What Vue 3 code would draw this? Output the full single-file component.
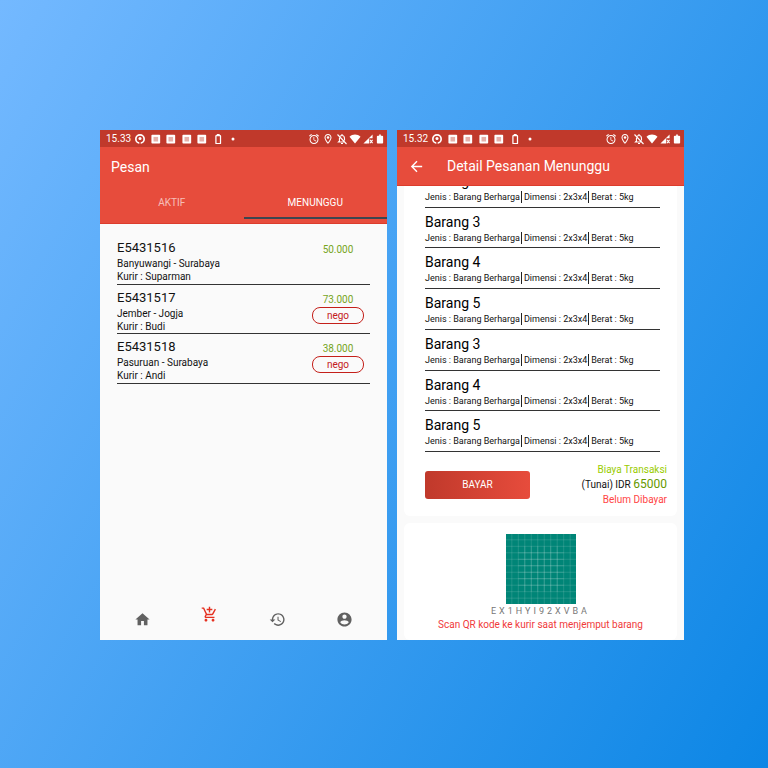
<script setup>
import { h, ref } from 'vue'

const activeTab = ref('MENUNGGU')
const tabs = ['AKTIF', 'MENUNGGU']

const orders = [
  { code: 'E5431516', route: 'Banyuwangi - Surabaya', courier: 'Suparman', price: '50.000', nego: false },
  { code: 'E5431517', route: 'Jember - Jogja', courier: 'Budi', price: '73.000', nego: true },
  { code: 'E5431518', route: 'Pasuruan - Surabaya', courier: 'Andi', price: '38.000', nego: true },
]

const items = ['Barang 5', 'Barang 3', 'Barang 4', 'Barang 5', 'Barang 3', 'Barang 4', 'Barang 5']

const nav = [
  { label: 'Beranda', path: 'M10 20v-6h4v6h5v-8h3L12 3 2 12h3v8z' },
  {
    label: 'Pesan',
    active: true,
    path: 'M11 9h2V6h3V4h-3V1h-2v3H8v2h3v3zm-4 9c-1.1 0-1.99.9-1.99 2S5.9 22 7 22s2-.9 2-2-.9-2-2-2zm10 0c-1.1 0-1.99.9-1.99 2s.89 2 1.99 2 2-.9 2-2-.9-2-2-2zm-9.83-3.25l.03-.12.9-1.63h7.45c.75 0 1.41-.41 1.75-1.03l3.86-7.01L19.42 4h-.01l-1.1 2-2.76 5H8.53l-.13-.27L6.16 6l-.95-2-.94-2H1v2h2l3.6 7.59-1.35 2.45c-.16.28-.25.61-.25.96 0 1.1.9 2 2 2h12v-2H7.42c-.13 0-.25-.11-.25-.25z',
  },
  {
    label: 'Riwayat',
    path: 'M13 3c-4.97 0-9 4.03-9 9H1l3.89 3.89.07.14L9 12H6c0-3.87 3.13-7 7-7s7 3.13 7 7-3.13 7-7 7c-1.93 0-3.68-.79-4.94-2.06l-1.42 1.42C8.27 19.99 10.51 21 13 21c4.97 0 9-4.03 9-9s-4.03-9-9-9zm-1 5v5l4.28 2.54.72-1.21-3.5-2.08V8H12z',
  },
  {
    label: 'Akun',
    path: 'M12 2C6.48 2 2 6.48 2 12s4.48 10 10 10 10-4.48 10-10S17.52 2 12 2zm0 3c1.66 0 3 1.34 3 3s-1.34 3-3 3-3-1.34-3-3 1.34-3 3-3zm0 14.2c-2.5 0-4.71-1.28-6-3.22.03-1.99 4-3.08 6-3.08 1.99 0 5.97 1.09 6 3.08-1.29 1.94-3.5 3.22-6 3.22z',
  },
]

const outer = [9, 19, 29, 39, 49, 59, 69, 79, 89, 99]
const inner = [29, 39, 49, 59, 69, 79]
const gridPath = outer.map((n) => `M${n} 0V108M0 ${n}H108`).join('')
const innerPath = inner.map((n) => `M${n} 19V89M19 ${n}H89`).join('')

const svg = (cls, children) => h('svg', { class: cls, viewBox: '0 0 24 24', 'aria-hidden': 'true' }, children)
const solid = (d) => h('path', { d, fill: 'currentColor' })

const StatusBar = (props) =>
  h('div', { class: 'status' }, [
    h('span', { class: 'clock' }, props.time),
    h('div', { class: 'notices' }, [
      svg('s-icon', [
        h('circle', { cx: 12, cy: 12, r: 10, fill: 'none', stroke: 'currentColor', 'stroke-width': 4 }),
        h('circle', { cx: 12, cy: 11, r: 3.6, fill: 'currentColor' }),
        h('path', { d: 'M12 15v9', stroke: '#c0392b', 'stroke-width': 3.4 }),
      ]),
      ...[1, 2, 3, 4].map(() =>
        svg('s-icon', [
          h('rect', { x: 1, y: 2, width: 21, height: 21, rx: 2, fill: 'currentColor' }),
          h('rect', { x: 6, y: 7, width: 11, height: 11, fill: '#c0392b', opacity: 0.4 }),
        ]),
      ),
      svg('s-icon', [
        h('rect', { x: 7, y: 4, width: 11, height: 19, rx: 1, fill: 'none', stroke: 'currentColor', 'stroke-width': 3 }),
        h('path', { d: 'M9 2h7', stroke: 'currentColor', 'stroke-width': 4 }),
      ]),
      svg('s-icon', [h('circle', { cx: 12, cy: 12, r: 3.6, fill: 'currentColor' })]),
    ]),
    h('div', { class: 'signals' }, [
      svg('s-icon large', [
        solid('M22 5.72l-4.6-3.86-1.29 1.53 4.6 3.86L22 5.72zM7.88 3.39L6.6 1.86 2 5.71l1.29 1.53 4.59-3.85zM12.5 8H11v6l4.75 2.85.75-1.23-4-2.37V8zM12 4c-4.97 0-9 4.03-9 9s4.02 9 9 9c4.97 0 9-4.03 9-9s-4.03-9-9-9zm0 16c-3.87 0-7-3.13-7-7s3.13-7 7-7 7 3.13 7 7-3.13 7-7 7z'),
      ]),
      svg('s-icon large', [
        solid('M12 2C8.13 2 5 5.13 5 9c0 5.25 7 13 7 13s7-7.75 7-13c0-3.87-3.13-7-7-7zM7 9c0-2.76 2.24-5 5-5s5 2.24 5 5c0 2.88-2.88 7.19-5 9.88C9.92 16.21 7 11.85 7 9z'),
        h('circle', { cx: 12, cy: 9, r: 2.5, fill: 'currentColor' }),
      ]),
      svg('s-icon large', [
        h('path', {
          d: 'M3 3l18 19M8.5 6.5C9.5 5.5 10.7 5 12 5c3 0 5 2.5 5 6v4M7 9.5c-.2 2-.1 5 0 6.5l-2 2h13M12 2v3M10 21h4',
          fill: 'none', stroke: 'currentColor', 'stroke-width': 2.2,
        }),
      ]),
      svg('s-icon large', [solid('M12 21L1 7.5C4 4.5 8 3 12 3s8 1.5 11 4.5z')]),
      svg('s-icon', [
        solid('M1 23L23 1v9h-8v13z'),
        h('path', { d: 'M17 14l6 8M23 14l-6 8', stroke: 'currentColor', 'stroke-width': 2.6 }),
      ]),
      svg('s-icon', [solid('M16 4h-2V1h-4v3H7C5.5 4 4.500 4.700 4.500 6v15c0 1.300.7 2 2 2h11c1.300 0 2-.7 2-2V6c0-1.300-1-2-2.500-2z')]),
    ]),
  ])
StatusBar.props = ['time']
</script>

<template>
  <main class="stage">
    <section class="phone">
      <StatusBar time="15.33" />
      <header class="bar tabbed">
        <h1>Pesan</h1>
        <div class="tabs" role="tablist">
          <button
            v-for="tab in tabs"
            :key="tab"
            type="button"
            role="tab"
            :aria-selected="tab === activeTab"
            :class="{ on: tab === activeTab }"
            @click="activeTab = tab"
          >{{ tab }}</button>
        </div>
      </header>
      <ul class="orders">
        <li v-for="order in orders" :key="order.code">
          <div class="info">
            <h2>{{ order.code }}</h2>
            <p>{{ order.route }}</p>
            <p>Kurir : {{ order.courier }}</p>
          </div>
          <div class="deal">
            <span class="price">{{ order.price }}</span>
            <button v-if="order.nego" type="button">nego</button>
          </div>
        </li>
      </ul>
      <nav class="nav">
        <a v-for="entry in nav" :key="entry.label" href="#" :aria-label="entry.label" :class="{ on: entry.active }">
          <svg viewBox="0 0 24 24" aria-hidden="true"><path :d="entry.path" fill="currentColor" /></svg>
        </a>
      </nav>
    </section>

    <section class="phone">
      <StatusBar time="15.32" />
      <header class="bar plain">
        <a href="#" class="back" aria-label="Kembali">
          <svg viewBox="0 0 24 24" aria-hidden="true">
            <path d="M20 11H7.830l5.590-5.590L12 4l-8 8 8 8 1.410-1.410L7.830 13H20v-2z" fill="currentColor" />
          </svg>
        </a>
        <h1>Detail Pesanan Menunggu</h1>
      </header>
      <div class="content">
        <article class="card first">
          <ul class="items">
            <li v-for="(item, i) in items" :key="i">
              <h2>{{ item }}</h2>
              <p><span>Jenis : Barang Berharga</span><span>Dimensi : 2x3x4</span><span>Berat : 5kg</span></p>
            </li>
          </ul>
          <div class="payment">
            <button type="button">BAYAR</button>
            <div class="cost">
              <p class="label">Biaya Transaksi</p>
              <p class="total">(Tunai) IDR <strong>65000</strong></p>
              <p class="unpaid">Belum Dibayar</p>
            </div>
          </div>
        </article>
        <article class="card scan">
          <svg class="code" viewBox="0 0 108 108" role="img" aria-label="QR">
            <rect width="108" height="108" fill="#008577" />
            <g fill="none" stroke="#fff" stroke-width="1">
              <path :d="gridPath" stroke-opacity="0.2" />
              <path :d="innerPath" stroke-opacity="0.22" />
            </g>
          </svg>
          <p class="serial">EX1HYI92XVBA</p>
          <p class="hint">Scan QR kode ke kurir saat menjemput barang</p>
        </article>
      </div>
    </section>
  </main>
</template>

<style>
body {
  margin: 0;
}
</style>

<style scoped>
* {
  box-sizing: border-box;
}

h1, h2, p, ul {
  margin: 0;
  padding: 0;
  font-weight: 400;
}

ul {
  list-style: none;
}

button {
  font: inherit;
  padding: 0;
  border: 0;
  background: none;
  cursor: pointer;
}

.stage {
  min-height: 100vh;
  padding: 130px 84px 128px 100px;
  display: grid;
  grid-template-columns: 1fr 1fr;
  gap: 10px;
  background: linear-gradient(120deg, #74b9ff, #0c86e5);
  font-family: Roboto, "Liberation Sans", sans-serif;
  font-size: 10px;
  color: #111;
}

.phone {
  display: flex;
  flex-direction: column;
  min-width: 0;
  background: #fafafa;
  overflow: hidden;
}

:deep(.status) {
  display: flex;
  align-items: center;
  height: 17px;
  padding: 0 2px 0 6px;
  background: #c0392b;
  color: #fff;
}

:deep(.clock) {
  width: 29px;
  line-height: 17px;
}

:deep(.notices) {
  display: flex;
  justify-content: space-between;
  width: 103px;
}

:deep(.signals) {
  display: flex;
  justify-content: space-between;
  align-items: center;
  width: 77px;
  margin-left: auto;
}

:deep(.s-icon) {
  display: block;
  width: 10px;
  height: 10px;
}

:deep(.s-icon.large) {
  width: 12px;
  height: 12px;
}

.bar {
  position: relative;
  z-index: 1;
  background: #e74c3c;
  border-bottom: 1px solid #dc3c2c;
  color: #fff;
}

.bar h1 {
  font-size: 14px;
  line-height: 38px;
}

.tabbed h1 {
  padding: 1px 11px 0;
}

.tabs {
  display: grid;
  grid-template-columns: 1fr 1fr;
  padding-bottom: 4px;
}

.tabs button {
  height: 33px;
  padding-top: 1px;
  border-bottom: 2px solid transparent;
  color: rgba(255, 255, 255, 0.65);
}

.tabs button.on {
  color: #fff;
  border-bottom-color: #3c4650;
}

.orders {
  display: grid;
  grid-auto-rows: 1fr;
  height: 149px;
  margin: 11px 17px 0;
}

.orders li {
  display: flex;
  justify-content: space-between;
  border-bottom: 1px solid #333;
}

.info {
  padding-top: 4px;
}

.info h2 {
  font-size: 13px;
  line-height: 18px;
}

.info p {
  line-height: 13px;
}

.deal {
  display: flex;
  flex-direction: column;
  align-items: center;
  width: 52px;
  margin-right: 6px;
  padding-top: 8px;
}

.price {
  line-height: 14px;
  color: #76a51c;
}

.deal button {
  width: 100%;
  height: 17px;
  border: 1px solid #c4201a;
  border-radius: 8px;
  color: #c4201a;
}

.nav {
  display: grid;
  grid-template-columns: repeat(4, 1fr);
  margin-top: auto;
  padding: 0 9px 12px;
}

.nav a {
  display: flex;
  justify-content: center;
  padding-top: 5px;
  color: #616161;
}

.nav a.on {
  padding: 0 0 5px;
  color: #e53020;
}

.nav svg {
  width: 17px;
  height: 17px;
}

.plain {
  display: flex;
  align-items: center;
}

.plain h1 {
  padding-top: 1px;
  line-height: 37px;
}

.back {
  display: flex;
  width: 50px;
  padding-left: 11px;
  color: #fff;
}

.back svg {
  width: 17px;
  height: 17px;
}

.content {
  display: flex;
  flex-direction: column;
  gap: 7px;
  padding: 0 7px;
}

.card {
  background: #fff;
  border-radius: 6px;
}

.first {
  margin-top: -19px;
}

.items {
  display: grid;
  grid-auto-rows: 1fr;
  height: 285px;
  padding: 0 17px 0 21px;
}

.items li {
  padding-top: 5px;
  border-bottom: 1px solid #333;
}

.items h2 {
  font-size: 14px;
  line-height: 18px;
  color: #000;
}

.items p {
  display: flex;
  font-size: 9px;
  line-height: 12px;
  padding-top: 1px;
  white-space: nowrap;
}

.items span + span {
  margin-left: 1px;
  padding-left: 2px;
  border-left: 1px solid #222;
}

.payment {
  display: flex;
  align-items: center;
  justify-content: space-between;
  padding: 10px 10px 9px 21px;
}

.payment button {
  width: 105px;
  height: 28px;
  border-radius: 3px;
  background: linear-gradient(90deg, #c0392b, #e74c3c);
  color: #fff;
}

.cost {
  text-align: right;
  line-height: 15px;
}

.label {
  color: #99cc00;
}

.total strong {
  font-size: 12px;
  font-weight: 400;
  color: #669900;
}

.unpaid {
  color: #ff4444;
}

.scan {
  display: flex;
  flex-direction: column;
  align-items: center;
  padding: 11px 0 8px;
  line-height: 14px;
}

.code {
  width: 70px;
  height: 70px;
}

.serial {
  font-size: 9px;
  letter-spacing: 3px;
  color: #777;
}

.hint {
  color: #f03a3a;
}
</style>
